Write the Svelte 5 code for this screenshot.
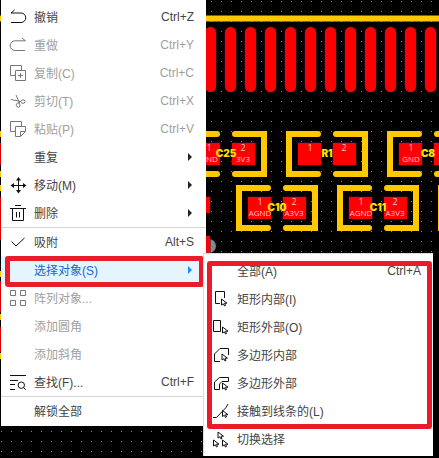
<script lang="ts">
	type Item = {
		label: string;
		icon?: string;
		keys?: string;
		disabled?: boolean;
		arrow?: boolean;
		selected?: boolean;
		divider?: boolean;
	};

	const items: Item[] = [
		{ label: '撤销', icon: 'undo', keys: 'Ctrl+Z' },
		{ label: '重做', icon: 'redo', keys: 'Ctrl+Y', disabled: true },
		{ label: '复制(C)', icon: 'copy', keys: 'Ctrl+C', disabled: true },
		{ label: '剪切(T)', icon: 'cut', keys: 'Ctrl+X', disabled: true },
		{ label: '粘贴(P)', icon: 'paste', keys: 'Ctrl+V', disabled: true },
		{ label: '重复', arrow: true },
		{ label: '移动(M)', icon: 'move', arrow: true },
		{ label: '删除', icon: 'trash', arrow: true },
		{ label: '吸附', icon: 'check', keys: 'Alt+S', divider: true },
		{ label: '选择对象(S)', arrow: true, selected: true },
		{ label: '阵列对象...', icon: 'array', disabled: true },
		{ label: '添加圆角', disabled: true },
		{ label: '添加斜角', disabled: true },
		{ label: '查找(F)...', icon: 'find', keys: 'Ctrl+F' },
		{ label: '解锁全部', divider: true },
	];

	const subItems: Item[] = [
		{ label: '全部(A)', keys: 'Ctrl+A' },
		{ label: '矩形内部(I)', icon: 'rectIn' },
		{ label: '矩形外部(O)', icon: 'rectOut' },
		{ label: '多边形内部', icon: 'polyIn' },
		{ label: '多边形外部', icon: 'polyOut' },
		{ label: '接触到线条的(L)', icon: 'touch' },
		{ label: '切换选择', icon: 'toggle' },
	];

	const icons: Record<string, string> = {
		undo: 'M4.5 1L1 4H11A4.7 4.7 0 0 1 11 13.5H1',
		redo: 'M12 1L15.5 3.8H5A4.7 4.7 0 0 0 5 13.5H15',
		copy: 'M5.5 10.5H.5V.5H11.5V5.5M5.5 5.5H15.5V15.5H5.5ZM10.5 8V13M8 10.5H13',
		cut: 'M1 6.5L11 8.5M6 2L9.5 10M11 8.5A2 1.8 0 1 0 13 6.8Q11.5 6.8 9 10A2 2.2 0 1 0 9.8 13.5Q10.5 12.5 9 9.5',
		paste: 'M5.5 10.5H.5V.5H11.5V5.5M10.5 15.5H5.5V5.5H15.5V10.5ZV10.5H15.5',
		move: 'M8.5 2V15M2 8.5H15',
		trash: 'M5 .5H11M0 3.5H16M2.5 3.5V15.5H13.5V3.5M6.5 7V12.5M9.5 7V12.5',
		check: 'M1.5 7.5L6 12L14.5 4',
		array: 'M.5 .5H5.5V5.5H.5ZM10.5 .5H15.5V5.5H10.5ZM.5 10.5H5.5V15.5H.5ZM10.5 10.5H15.5V15.5H10.5Z',
		find: 'M0 1.5H16M0 6.5H8M0 10.5H5M0 15.5H5M14.5 11.2A3.2 3.2 0 1 1 8.1 11.2A3.2 3.2 0 1 1 14.5 11.2M13.5 13.5L15.7 15.7',
		rectIn: 'M7 12.5H2.5V.5H11.5V7',
		rectOut: 'M.5 1.5H7.5V12.5H.5Z',
		polyIn: 'M7 14.5H1.5V7L7 1.5H15.5V8',
		polyOut: 'M6.5 14.5H1.5V7L6.5 2.5H15.5V6.5H9L6.5 9Z',
		touch: 'M0 14.5H3.5L13 4.5L15 1',
		toggle: '',
	};

	const cursors: Record<string, number[][]> = {
		rectIn: [[8.5, 8]],
		rectOut: [[9.5, 8]],
		polyIn: [[9, 7]],
		polyOut: [[9.5, 8]],
		touch: [[9.5, 7.5]],
		toggle: [[5, 1], [0.5, 9], [9.5, 9]],
	};

	const bars = Array.from({ length: 12 }, (_, i) => 211 + i * 20);

	const parts = [
		{ name: 'C25', x: 226, y: 154, pins: [['1', 'GND'], ['2', '3V3']] },
		{ name: 'R1', x: 327, y: 154, pins: [['1', ''], ['2', '']] },
		{ name: 'C8', x: 428, y: 154, pins: [['1', 'GND']] },
		{ name: 'C10', x: 277, y: 208, pins: [['1', 'AGND'], ['2', 'A3V3']] },
		{ name: 'C11', x: 378, y: 208, pins: [['1', 'AGND'], ['2', 'A3V3']] },
		{ name: '', x: 479, y: 208, pins: [] },
	];
</script>

{#snippet row(item: Item)}
	<button
		type="button"
		class="item"
		class:selected={item.selected}
		disabled={item.disabled}
		role="menuitem"
		aria-haspopup={item.arrow ? 'menu' : undefined}
	>
		<svg class="icon" viewBox="0 0 16 16" aria-hidden="true">
			{#if item.icon}
				<path class="line" d={icons[item.icon]} />
				{#if item.icon === 'move'}
					<path class="fill" d="M8.5 0L11 3.5H6ZM8.5 16.5L11 13H6ZM.5 8.5L4 6V11ZM16.5 8.5L13 6V11Z" />
				{/if}
				{#each cursors[item.icon] ?? [] as [x, y]}
					<path class="cursor" transform="translate({x} {y})" d="M0 0V6L1.8 4.8L3 7L4 6.5L3 4.2H5.5Z" />
				{/each}
			{/if}
		</svg>
		<span class="label">{item.label}</span>
		{#if item.keys}
			<kbd>{item.keys}</kbd>
		{/if}
		{#if item.arrow}
			<span class="arrow"></span>
		{/if}
	</button>
{/snippet}

<div class="editor">
	<svg class="board" aria-hidden="true">
		<defs>
			<pattern id="grid" width="10" height="10" patternUnits="userSpaceOnUse">
				<rect x="1" y="1" width="1" height="1" fill="#888" />
			</pattern>
		</defs>
		<rect width="100%" height="100%" fill="url(#grid)" />
		<path class="silk" d="M0 18.5H460" />
		{#each bars as x}
			<rect class="pad" x={x - 6} y="27" width="11" height="65" rx="5.5" />
		{/each}
		<rect class="pad" x="190" y="197" width="20" height="16" />
		<circle cx="209" cy="246" r="7" fill="#888" />
		<rect class="pad" x="190" y="236" width="20" height="20" />
		<path fill="#d00" d="M0 143H2V165H0ZM0 197H2V240H0ZM0 281H2V312H0ZM0 327H2V352H0Z" />
		<path class="silk" d="M-3 134H1M-3 174H1M-3 188H1M-3 274H1M-3 317H1M-3 356H1" />
		{#each parts as part}
			<g transform="translate({part.x} {part.y})">
				<path class="silk" d="M-9 -20H-38V20H-9M9 -20H38V20H9" />
				<rect class="pad" x="-29" y="-11" width="23" height="22" />
				<rect class="pad" x="6" y="-11" width="23" height="22" />
				{#each part.pins as [num, net], i}
					<text class="pin num" x={i ? 17 : -17} y="-3">{num}</text>
					{#if net}
						<text class="pin" x={i ? 17 : -17} y="8">{net}</text>
					{/if}
				{/each}
				{#if part.name}
					<text class="name" x="0" y="3">{part.name}</text>
				{/if}
			</g>
		{/each}
	</svg>

	<ul class="menu" role="menu">
		{#each items as item}
			<li class:divider={item.divider} class:open={item.selected} role="none">
				{@render row(item)}
				{#if item.selected}
					<span class="mark"></span>
					<ul class="menu submenu" role="menu">
						{#each subItems as sub}
							<li role="none">{@render row(sub)}</li>
						{/each}
						<li class="mark" role="none"></li>
					</ul>
				{/if}
			</li>
		{/each}
	</ul>
</div>

<style>
	:global(body) {
		margin: 0;
		background: #000;
	}

	.editor {
		position: relative;
		display: flex;
		align-items: flex-start;
		min-height: 100vh;
		padding-left: 1px;
		box-sizing: border-box;
		overflow: hidden;
		font-family: 'Liberation Sans', 'Noto Sans CJK SC', sans-serif;
		font-size: 12px;
	}

	.board {
		position: absolute;
		inset: 0;
		width: 100%;
		height: 100%;
	}

	.silk {
		fill: none;
		stroke: #ffc800;
		stroke-width: 6;
		stroke-linecap: round;
	}

	.pad {
		fill: #f00;
		stroke: #500028;
		stroke-width: 1;
		paint-order: stroke;
	}

	.pin {
		fill: #ffc4c4;
		font-family: 'Open Sans', 'Noto Sans', sans-serif;
		font-size: 8px;
		text-anchor: middle;
	}

	.num {
		font-size: 9px;
	}

	.name {
		fill: #ffe000;
		font-family: Inter, sans-serif;
		font-size: 10px;
		font-weight: 900;
		text-anchor: middle;
	}

	.menu {
		position: relative;
		min-width: 205px;
		margin: 0;
		padding: 3px 0 1px;
		box-sizing: border-box;
		background: #fff;
		list-style: none;
	}

	.divider {
		border-top: 1px solid #d4d4d4;
	}

	.open {
		position: relative;
	}

	.item {
		display: flex;
		align-items: center;
		gap: 8px;
		width: 100%;
		height: 28px;
		padding: 0 12px 0 9px;
		border: 0;
		background: none;
		color: #444;
		font: inherit;
		text-align: left;
		white-space: nowrap;
	}

	.item:disabled {
		color: #a0a0a0;
	}

	.item.selected {
		background: #e5f5ff;
		color: #1467d2;
	}

	.icon {
		flex: none;
		width: 16px;
		height: 16px;
		overflow: visible;
		color: #111;
	}

	.item:disabled .icon {
		color: #777;
	}

	.line {
		fill: none;
		stroke: currentColor;
		stroke-width: 1;
	}

	.fill {
		fill: currentColor;
	}

	.cursor {
		fill: #fff;
		stroke: currentColor;
		stroke-width: 1;
	}

	.label {
		flex: 1;
		padding-bottom: 2px;
	}

	kbd {
		font: inherit;
	}

	.arrow {
		margin-right: 2px;
		border: 4px solid transparent;
		border-left-color: #222;
		border-right-width: 0;
	}

	.selected .arrow {
		border-left-color: #1890ff;
	}

	.submenu {
		position: absolute;
		top: -3px;
		left: calc(100% - 3px);
		min-width: 230px;
		padding: 3px 0;
		border: 1px solid #ddd;
		border-width: 1px 0 0 1px;
	}

	/* red callout frames */
	.mark {
		position: absolute;
		inset: 0 2px -3px 4px;
		border: 5px solid #ea1c2a;
		border-radius: 3px;
		pointer-events: none;
	}

	.submenu .mark {
		inset: 7px 1px 27px 3px;
	}
</style>
